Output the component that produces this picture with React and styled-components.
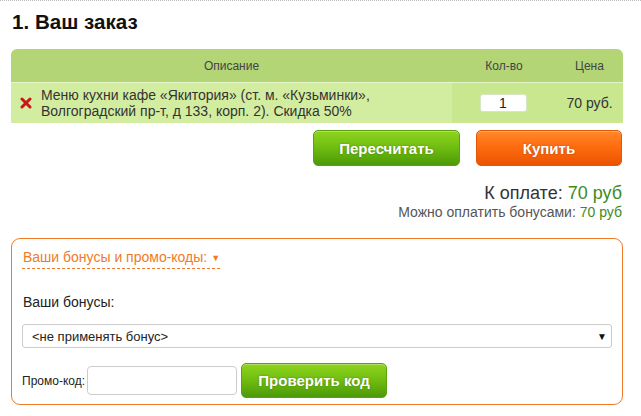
import React from "react";
import styled, { createGlobalStyle } from "styled-components";

const GlobalStyle = createGlobalStyle`
  body {
    margin: 0;
    background: #fff;
    font-family: "Liberation Sans", Arial, sans-serif;
    color: #333;
  }
`;

const Page = styled.div`
  width: 641px;
  height: 416px;
  box-sizing: border-box;
  border-top: 1px dotted #bbb;
  padding: 0 18px 0 11px;
  overflow: hidden;
`;

const Title = styled.h1`
  margin: 9px 0 0 1px;
  font-size: 20.6px;
  line-height: 24px;
  font-weight: bold;
  color: #111;
`;

const Table = styled.div`
  margin-top: 15px;
  width: 612px;
  border-radius: 6px 6px 0 0;
  overflow: hidden;
`;

const Row = styled.div`
  display: grid;
  grid-template-columns: 441px 104px 67px;
  height: ${(p) => p.h}px;
  background: ${(p) => p.bg};
  border-bottom: ${(p) => (p.line ? "1px solid #e6f5c8" : "none")};
`;

const HeadCell = styled.div`
  display: flex;
  align-items: center;
  justify-content: center;
  font-size: 12px;
  color: #444;
`;

const Cell = styled.div`
  display: flex;
  align-items: center;
  justify-content: ${(p) => p.justify || "center"};
  background: ${(p) => p.bg || "transparent"};
  font-size: 14px;
  color: #333;
  line-height: 16px;
`;

const Remove = styled.span`
  display: inline-flex;
  width: 30px;
  justify-content: center;
  flex-shrink: 0;
`;

const QtyInput = styled.div`
  width: 47px;
  height: 18px;
  box-sizing: border-box;
  margin-left: -2px;
  background: #fff;
  border: 1px solid #d8e6c4;
  border-radius: 3px;
  font-size: 14px;
  text-align: center;
  line-height: 16px;
  color: #222;
`;

const Buttons = styled.div`
  display: flex;
  justify-content: flex-end;
  gap: 16px;
  margin-top: 7px;
  padding-right: 1px;
`;

const Btn = styled.div`
  width: ${(p) => p.w || 147}px;
  height: ${(p) => p.hgt || 36}px;
  box-sizing: border-box;
  border-radius: 5px;
  display: flex;
  align-items: center;
  justify-content: center;
  font-size: 15px;
  font-weight: bold;
  color: #fff;
  text-shadow: 0 0 2px rgba(0, 0, 0, 0.3);
  background: ${(p) =>
    p.orange
      ? "linear-gradient(#ff8a2a 0%, #ff6c10 45%, #ea5400 100%)"
      : "linear-gradient(#8fd41e 0%, #72bf12 45%, #4c9a08 100%)"};
  border: 1px solid ${(p) => (p.orange ? "#e0580a" : "#5aa010")};
  box-shadow: inset 0 1px 0 rgba(255, 255, 255, 0.3);
`;

const Total = styled.div`
  margin-top: 17px;
  text-align: right;
  font-size: 18px;
  line-height: 20px;
  color: #333;
  padding-right: 1px;
`;

const Bonus = styled.div`
  margin-top: 1px;
  text-align: right;
  font-size: 14px;
  line-height: 16px;
  color: #555;
  padding-right: 1px;
`;

const Green = styled.span`
  color: #3d8c1c;
`;

const PromoBox = styled.div`
  margin-top: 18px;
  width: 612px;
  height: 167px;
  box-sizing: border-box;
  border: 1px solid #f07a28;
  border-radius: 9px;
  padding: 9px 10px 0 10px;
`;

const Toggle = styled.div`
  display: flex;
  align-items: center;
  width: fit-content;
  gap: 4px;
  font-size: 14px;
  line-height: 18px;
  height: 18px;
  color: #f07a28;
  border-bottom: 1px dashed #f07a28;
  padding: 0 0 2px 1px;
`;

const Arrow = styled.span`
  font-size: 9px;
  line-height: 9px;
  margin-top: 3px;
`;

const Label = styled.div`
  margin-top: 25px;
  margin-left: 1px;
  font-size: 14px;
  line-height: 16px;
  color: #222;
`;

const Select = styled.div`
  margin-top: 14px;
  width: 590px;
  height: 24px;
  box-sizing: border-box;
  border: 1px solid #ccc;
  border-radius: 3px;
  display: flex;
  align-items: center;
  justify-content: space-between;
  padding: 0 4px 0 9px;
  font-size: 13px;
  color: #222;
`;

const SelArrow = styled.span`
  font-size: 10px;
  color: #111;
`;

const PromoRow = styled.div`
  display: flex;
  align-items: center;
  margin-top: 15px;
  font-size: 12px;
  color: #222;
`;

const PromoInput = styled.div`
  width: 150px;
  height: 29px;
  box-sizing: border-box;
  margin: 0 4px 0 2px;
  border: 1px solid #ccc;
  border-radius: 4px;
  background: #fff;
`;

function RemoveIcon() {
  return (
    <svg width="12" height="12" viewBox="0 0 12 12">
      <path d="M2 2 L10 10 M10 2 L2 10" stroke="#c8161b" strokeWidth="3" strokeLinecap="round" />
    </svg>
  );
}

export default function App() {
  return (
    <>
      <GlobalStyle />
      <Page>
        <Title>1. Ваш заказ</Title>
        <Table>
          <Row h={33} bg="#b3d576" line>
            <HeadCell>Описание</HeadCell>
            <HeadCell>Кол-во</HeadCell>
            <HeadCell>Цена</HeadCell>
          </Row>
          <Row h={40} bg="#d3eda0">
            <Cell justify="flex-start">
              <Remove>
                <RemoveIcon />
              </Remove>
              <span>
                Меню кухни кафе «Якитория» (ст. м. «Кузьминки»,
                <br />
                Волгоградский пр-т, д 133, корп. 2). Скидка 50%
              </span>
            </Cell>
            <Cell bg="#c9e78e">
              <QtyInput>1</QtyInput>
            </Cell>
            <Cell bg="#c9e78e">70 руб.</Cell>
          </Row>
        </Table>
        <Buttons>
          <Btn>Пересчитать</Btn>
          <Btn orange w={146}>Купить</Btn>
        </Buttons>
        <Total>
          К оплате: <Green>70 руб</Green>
        </Total>
        <Bonus>
          Можно оплатить бонусами: <Green>70 руб</Green>
        </Bonus>
        <PromoBox>
          <Toggle>
            Ваши бонусы и промо-коды: <Arrow>▼</Arrow>
          </Toggle>
          <Label>Ваши бонусы:</Label>
          <Select>
            <span>&lt;не применять бонус&gt;</span>
            <SelArrow>▼</SelArrow>
          </Select>
          <PromoRow>
            <span>Промо-код:</span>
            <PromoInput />
            <Btn w={146} hgt={35}>Проверить код</Btn>
          </PromoRow>
        </PromoBox>
      </Page>
    </>
  );
}
